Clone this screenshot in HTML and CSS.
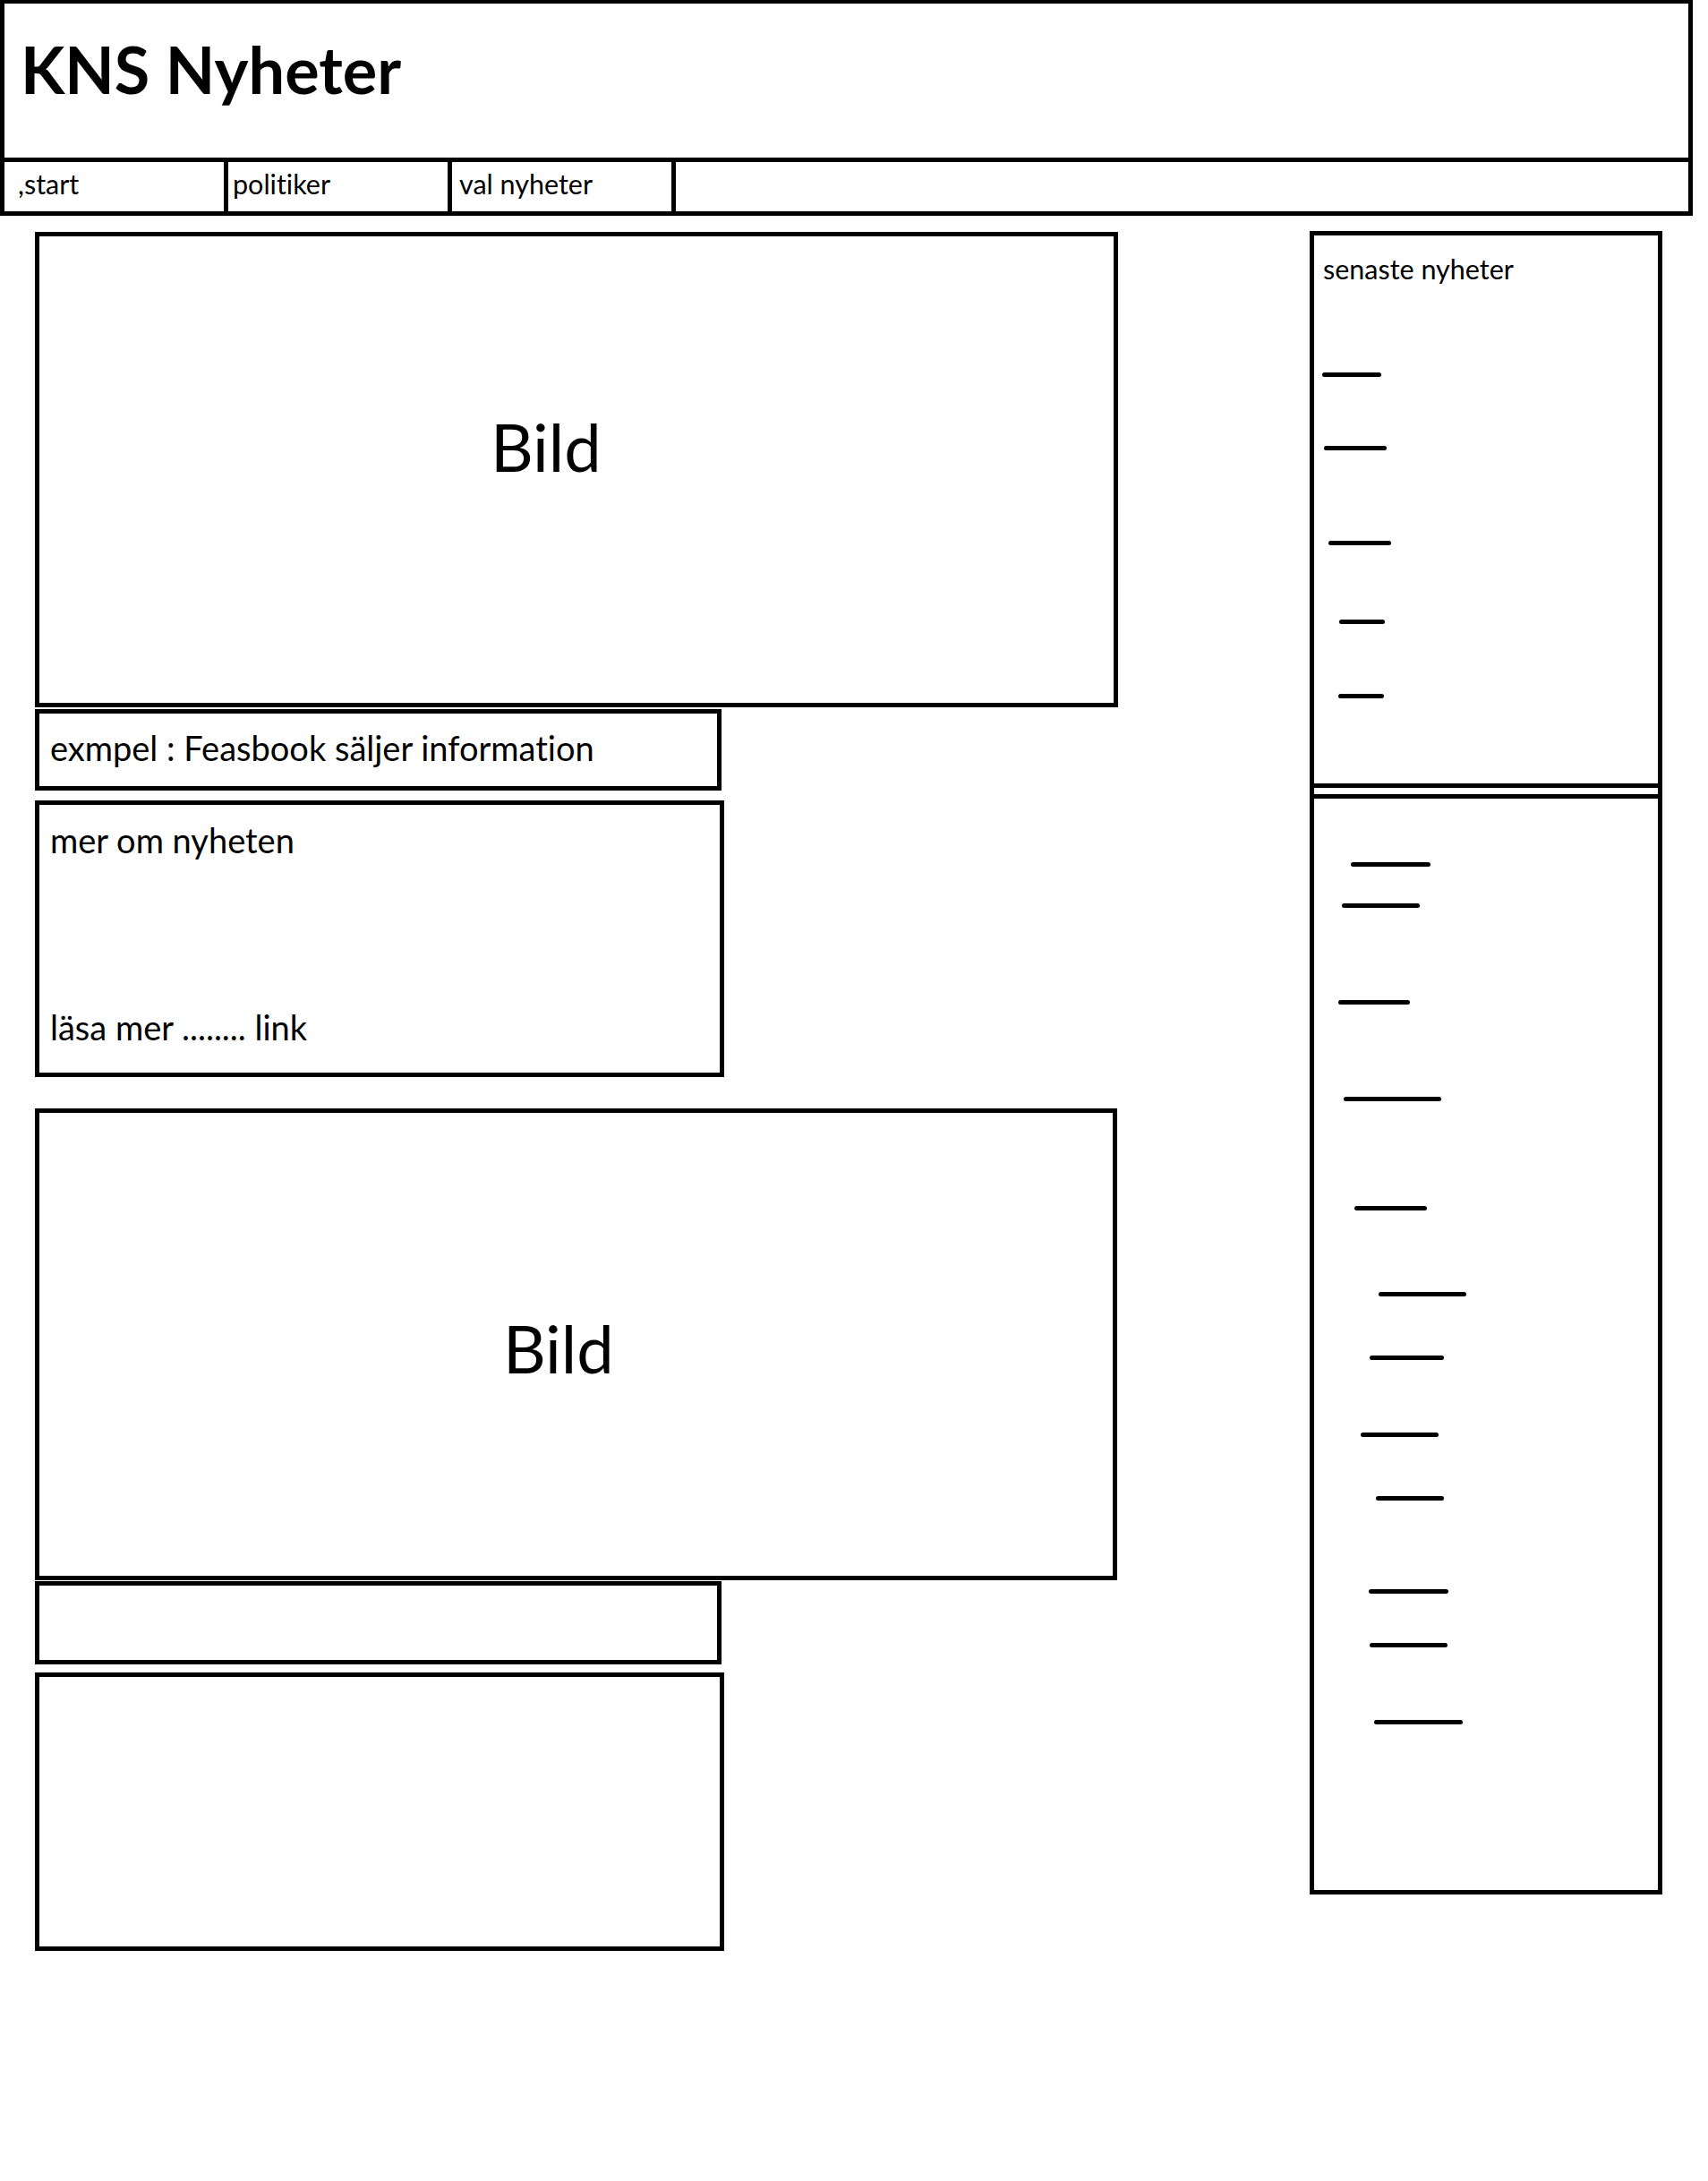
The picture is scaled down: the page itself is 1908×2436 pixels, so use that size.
FILE: index.html
```html
<!DOCTYPE html>
<html lang="sv">
<head>
<meta charset="utf-8">
<title>KNS Nyheter</title>
<link rel="stylesheet" href="styles.css">
</head>
<body>
<div class="page">
  <header class="masthead">
    <div class="brand"><h1 class="brand-title">KNS Nyheter</h1></div>
    <nav class="nav">
      <a class="nav-item nav-start" href="#">,start</a>
      <a class="nav-item nav-pol" href="#">politiker</a>
      <a class="nav-item nav-val" href="#">val nyheter</a>
    </nav>
  </header>
  <div class="content">
    <main class="main">
      <article class="story">
        <div class="picture"><span class="picture-label">Bild</span></div>
        <div class="headline"><p class="headline-text">exmpel : Feasbook säljer information</p></div>
        <div class="summary">
          <p class="summary-text">mer om nyheten</p>
          <p class="summary-link">läsa mer ........ link</p>
        </div>
      </article>
      <article class="story story-2">
        <div class="picture"><span class="picture-label">Bild</span></div>
        <div class="headline"></div>
        <div class="summary"></div>
      </article>
    </main>
    <aside class="sidebar">
      <section class="side-latest">
        <h2 class="side-title">senaste nyheter</h2>
        <ul class="dash-list">
          <li class="dash"></li><li class="dash"></li><li class="dash"></li><li class="dash"></li><li class="dash"></li>
        </ul>
      </section>
      <div class="side-divider"></div>
      <section class="side-more">
        <ul class="dash-list">
          <li class="dash"></li><li class="dash"></li><li class="dash"></li><li class="dash"></li>
          <li class="dash"></li><li class="dash"></li><li class="dash"></li><li class="dash"></li>
          <li class="dash"></li><li class="dash"></li><li class="dash"></li><li class="dash"></li>
        </ul>
      </section>
    </aside>
  </div>
</div>
</body>
</html>
```

FILE: styles.css
```css
* { box-sizing: border-box; }

body {
  margin: 0;
  background: #fff;
  color: #000;
  font-family: Lato, "Open Sans", sans-serif;
  font-variant-ligatures: none;
}

.masthead {
  width: 1891px;
  border: 5px solid #000;
  border-top-width: 4px;
}

.brand {
  height: 177px;
  border-bottom: 5px solid #000;
  padding: 30px 0 0 18px;
}

.brand-title {
  margin: 0;
  font-size: 72px;
  font-weight: 700;
  line-height: 86px;
}

.nav {
  display: flex;
  height: 55px;
}

.nav-item {
  width: 250px;
  height: 55px;
  border-right: 5px solid #000;
  font-size: 30.5px;
  line-height: 48px;
  color: #000;
  text-decoration: none;
}

.nav-start { padding-left: 15px; }
.nav-pol { padding-left: 5px; }
.nav-val { padding-left: 8px; }

.content {
  display: flex;
  align-items: flex-start;
  gap: 214px;
  padding: 18px 0 0 39px;
}

.main {
  width: 1210px;
  display: flex;
  flex-direction: column;
}

.story {
  display: flex;
  flex-direction: column;
  align-items: flex-start;
}

.picture {
  width: 1210px;
  height: 531px;
  border: 5px solid #000;
  padding: 190px 0 0 504px;
}

.picture-label {
  display: block;
  font-size: 74px;
  line-height: 89px;
}

.headline {
  width: 767px;
  height: 91px;
  margin-top: 2px;
  border: 5px solid #000;
  padding: 15px 0 0 12px;
}

.headline-text,
.summary-text,
.summary-link {
  margin: 0;
  font-size: 38px;
  line-height: 46px;
}

.summary {
  width: 770px;
  height: 309px;
  margin-top: 11px;
  border: 5px solid #000;
  padding: 16px 0 0 12px;
}

.summary-link { margin-top: 163px; }

.story-2 .picture {
  width: 1209px;
  height: 527px;
  margin-top: 35px;
  padding: 218px 0 0 518px;
}

.story-2 .headline {
  height: 93px;
  margin-top: 1px;
}

.story-2 .summary {
  height: 311px;
  margin-top: 9px;
}

.sidebar {
  width: 394px;
  height: 1858px;
  margin-top: -1px;
  border: 5px solid #000;
  display: flex;
  flex-direction: column;
}

.side-latest {
  height: 612px;
  padding: 17px 0 0 10px;
}

.side-title {
  margin: 0;
  font-size: 30.5px;
  font-weight: 400;
  line-height: 40px;
}

.side-divider {
  height: 17px;
  border-top: 5px solid #000;
  border-bottom: 5px solid #000;
}

.side-more { flex: 1; }

.dash-list {
  list-style: none;
  margin: 0;
  padding: 0;
}

.side-latest .dash-list { margin-left: -10px; }

.dash {
  height: 5px;
  border-radius: 3px;
  background: #000;
}

.side-latest .dash:nth-child(1) { margin: 96px 0 0 9px; width: 66px; }
.side-latest .dash:nth-child(2) { margin: 77px 0 0 11px; width: 70px; }
.side-latest .dash:nth-child(3) { margin: 101px 0 0 16px; width: 70px; }
.side-latest .dash:nth-child(4) { margin: 83px 0 0 28px; width: 51px; }
.side-latest .dash:nth-child(5) { margin: 78px 0 0 27px; width: 51px; }

.side-more .dash:nth-child(1) { margin: 71px 0 0 41px; width: 89px; }
.side-more .dash:nth-child(2) { margin: 41px 0 0 31px; width: 87px; }
.side-more .dash:nth-child(3) { margin: 103px 0 0 27px; width: 80px; }
.side-more .dash:nth-child(4) { margin: 103px 0 0 33px; width: 109px; }
.side-more .dash:nth-child(5) { margin: 117px 0 0 45px; width: 81px; }
.side-more .dash:nth-child(6) { margin: 91px 0 0 72px; width: 98px; }
.side-more .dash:nth-child(7) { margin: 66px 0 0 62px; width: 83px; }
.side-more .dash:nth-child(8) { margin: 81px 0 0 52px; width: 87px; }
.side-more .dash:nth-child(9) { margin: 66px 0 0 69px; width: 76px; }
.side-more .dash:nth-child(10) { margin: 99px 0 0 61px; width: 89px; }
.side-more .dash:nth-child(11) { margin: 55px 0 0 62px; width: 87px; }
.side-more .dash:nth-child(12) { margin: 81px 0 0 67px; width: 99px; }
```
